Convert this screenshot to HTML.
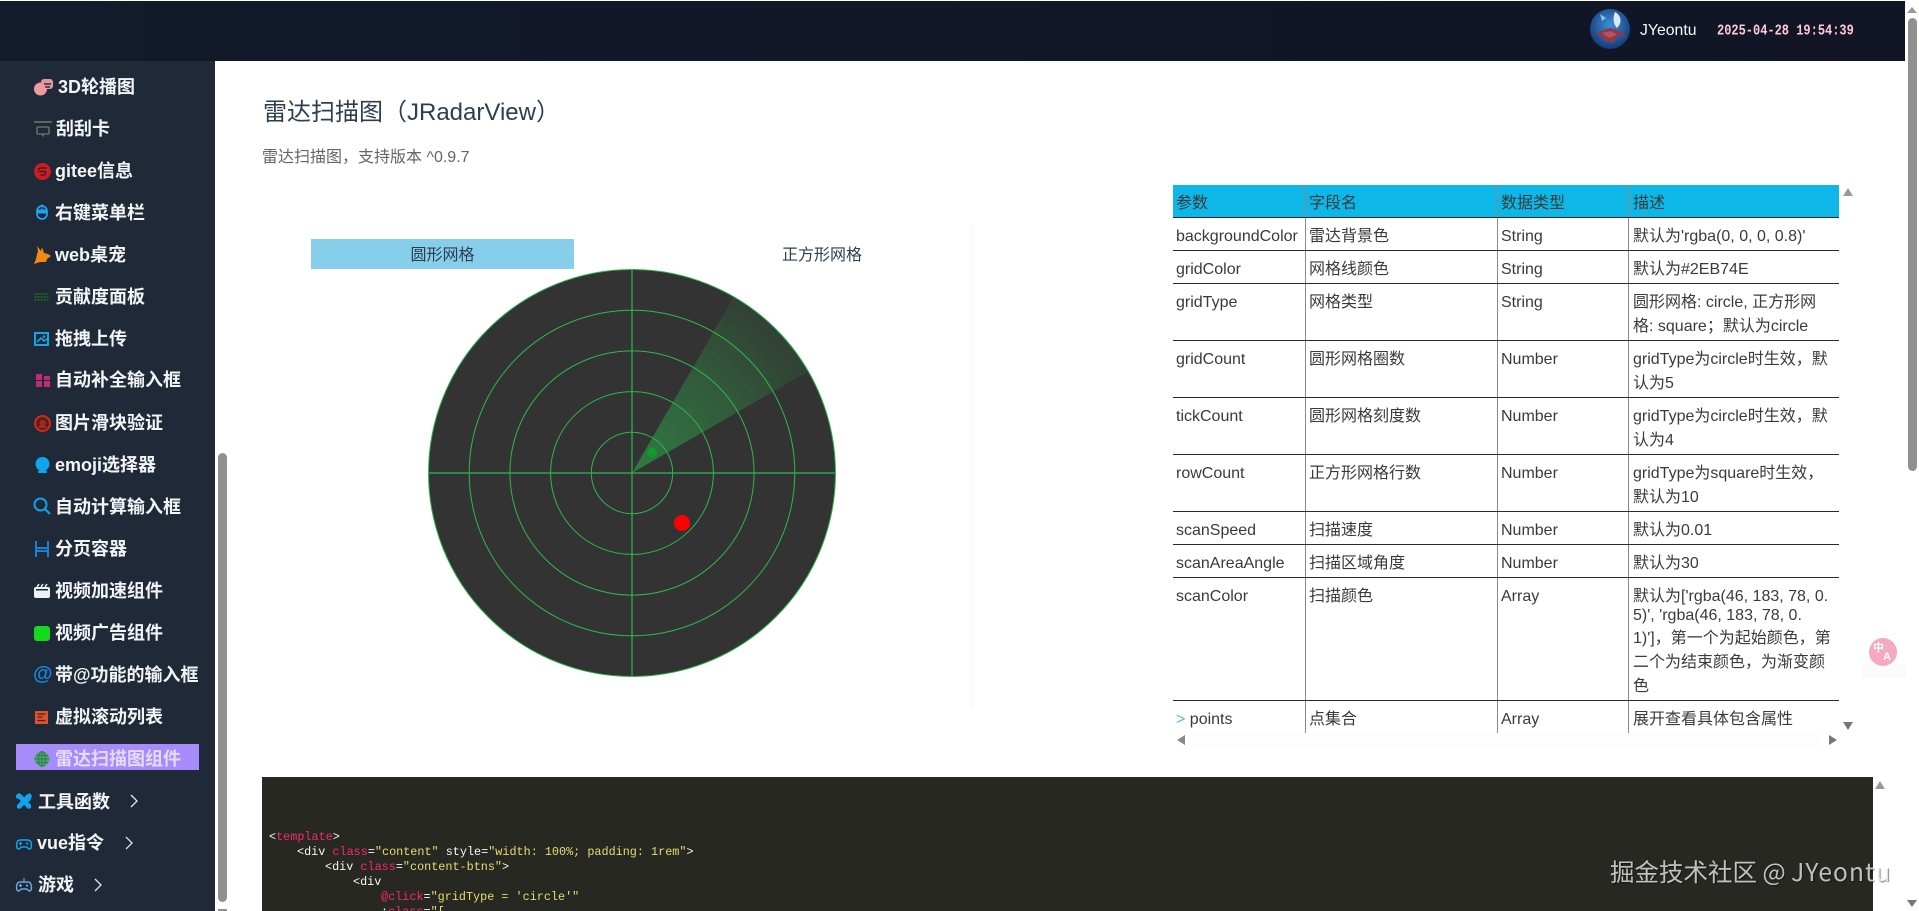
<!DOCTYPE html>
<html lang="zh">
<head>
<meta charset="utf-8">
<title>雷达扫描图</title>
<style>
html,body{margin:0;padding:0;background:#fff;overflow:hidden}
body{width:1919px;height:911px;position:relative;font-family:"Liberation Sans","Noto Sans CJK SC",sans-serif;color:#333}
.hd{position:absolute;left:0;top:1px;width:1905px;height:60px;background:linear-gradient(90deg,#121a2b,#111525)}
.sb{position:absolute;left:0;top:61px;width:215px;height:850px;background:#1f2937}
.m{position:absolute;font-size:18px;font-weight:700;line-height:24px;height:24px;color:#f3f4f6;white-space:nowrap}
.i{position:absolute;overflow:visible}
.t{position:absolute;font-size:16px;line-height:24px;height:24px;margin-top:2px;white-space:nowrap;color:#3a3a3a}
.h{position:absolute;left:1173px;width:666px;height:1px;background:#2a2a2a}
.v{position:absolute;width:1px;top:185px;height:548px;background:#8a8a8a}
.c{position:absolute;font-family:"Liberation Mono",monospace;font-size:11.8px;line-height:15px;height:15px;white-space:pre;color:#f8f8f2}
.c b{font-weight:400;color:#f92672}.c i{font-style:normal;color:#e6db74}
.ar{position:absolute;width:0;height:0;border-style:solid;border-color:transparent}
</style>
</head>
<body>
<div class="hd"></div>
<div class="sb"></div>

<!-- header right -->
<svg class="i" style="left:1590px;top:9px" width="40" height="40" viewBox="0 0 40 40">
<defs><clipPath id="av"><circle cx="20" cy="20" r="20"/></clipPath>
<radialGradient id="avb" cx="50%" cy="40%" r="60%"><stop offset="0" stop-color="#3f8fd8"/><stop offset="1" stop-color="#123a78"/></radialGradient></defs>
<g clip-path="url(#av)"><rect width="40" height="40" fill="url(#avb)"/>
<path d="M25 3C32 7 32 14 27 19 24 16 22 10 25 3Z" fill="#dfe8f2"/>
<path d="M5 24 14 21 20 19 30 22 36 28 27 27 24 34 15 32 10 27Z" fill="#8a3a4c"/>
<path d="M12 24 22 22 27 26 19 29Z" fill="#b9505e"/>
<path d="M10 5 16 9 12 12Z" fill="#7cc4ee"/></g>
</svg>
<div style="position:absolute;left:1640px;top:19px;font-size:15.8px;line-height:24px;color:#f4f6fa;white-space:nowrap">JYeontu</div>
<div style="position:absolute;left:1717px;top:24px;font-family:'Liberation Mono',monospace;font-weight:700;font-size:12px;line-height:14px;color:#ffc9d6;white-space:nowrap;transform:scaleY(1.2)">2025-04-28 19:54:39</div>

<!-- sidebar icons -->
<svg class="i" style="left:34px;top:78px" width="20" height="18" viewBox="0 0 20 18"><rect x="7" y="1" width="12" height="10" rx="3" fill="#e09a9a"/><circle cx="6.500" cy="11" r="6.500" fill="#ee9a9e"/><path d="M10 6h7M11 9h5" stroke="#3b2a35" stroke-width="1.600"/></svg>
<svg class="i" style="left:34px;top:121px" width="18" height="16" viewBox="0 0 18 16"><path d="M0 1h18" stroke="#777" stroke-width="1.400"/><rect x="3" y="6" width="12" height="7" rx="1" fill="none" stroke="#777" stroke-width="1.300"/><path d="M8 13l1.500 2.500" stroke="#777" stroke-width="1.300"/></svg>
<svg class="i" style="left:34px;top:163px" width="17" height="17" viewBox="0 0 17 17"><circle cx="8.500" cy="8.500" r="8.500" fill="#c71d23"/><path d="M4.500 8.500h7v1.500a2 2 0 0 1-2 2h-3M12.500 5H6.500a2 2 0 0 0-2 2" fill="none" stroke="#3a1520" stroke-width="1.300"/></svg>
<svg class="i" style="left:36px;top:204px" width="12" height="16" viewBox="0 0 12 16"><rect x="1" y="2" width="10" height="13" rx="5" fill="none" stroke="#1da6f0" stroke-width="1.700"/><path d="M1 6h10V9H1zM6 0v6" fill="#1da6f0" stroke="#1da6f0"/></svg>
<svg class="i" style="left:34px;top:246px" width="17" height="18" viewBox="0 0 17 18"><path d="M3 0l4 5 1-4 2 6 4 1 3 2-4 3-1 3-6 0-6 2 2-5 1-5 1-3z" fill="#f08a14"/></svg>
<svg class="i" style="left:34px;top:293px" width="16" height="9" viewBox="0 0 16 9"><path d="M1.500 0v9M4.500 0v9M7.500 0v9M10.500 0v9M13.500 0v9" stroke="#1f5a2a" stroke-width="2" stroke-dasharray="2 1"/></svg>
<svg class="i" style="left:34px;top:332px" width="15" height="14" viewBox="0 0 15 14"><rect x="1" y="1" width="13" height="12" fill="none" stroke="#13a4f0" stroke-width="2"/><path d="M3 10l4-4 3 3 3-2" fill="none" stroke="#13a4f0" stroke-width="1.600"/><circle cx="10" cy="4.500" r="1.300" fill="#13a4f0"/></svg>
<svg class="i" style="left:36px;top:374px" width="14" height="13" viewBox="0 0 14 13"><rect width="6" height="6" fill="#c12a78"/><rect x="8" y="2" width="6" height="4" fill="#c12a78"/><rect y="7" width="6" height="6" fill="#c12a78"/><rect x="8" y="7" width="6" height="6" fill="#c12a78"/></svg>
<svg class="i" style="left:34px;top:415px" width="17" height="17" viewBox="0 0 17 17"><circle cx="8.500" cy="8.500" r="7.500" fill="#5a1f1e" stroke="#cf2a1c" stroke-width="2"/><circle cx="8.500" cy="8" r="3" fill="#a52a1e"/><path d="M4 13l2-3h5l2 3" fill="#a52a1e"/></svg>
<svg class="i" style="left:35px;top:457px" width="15" height="16" viewBox="0 0 15 16"><circle cx="7.500" cy="7" r="7" fill="#0fa5ef"/><rect x="3" y="13.500" width="9" height="2.500" rx="1" fill="#0fa5ef"/></svg>
<svg class="i" style="left:33px;top:497px" width="18" height="18" viewBox="0 0 18 18"><circle cx="7.500" cy="7.500" r="6" fill="none" stroke="#12a0ea" stroke-width="2"/><path d="M12 12l5 5" stroke="#12a0ea" stroke-width="2.200"/></svg>
<svg class="i" style="left:35px;top:541px" width="14" height="16" viewBox="0 0 14 16"><path d="M1 0v16M13 0v16M1 7h12M1 10h12" stroke="#1c7fd0" stroke-width="2" fill="none"/></svg>
<svg class="i" style="left:34px;top:584px" width="16" height="14" viewBox="0 0 16 14"><rect y="3" width="16" height="11" rx="2" fill="#eef1f4"/><path d="M3 3l2-3M7 3l2-3M11 3l2-3" stroke="#eef1f4" stroke-width="1.500"/><rect x="2" y="5" width="12" height="1.500" fill="#1f2937"/></svg>
<div style="position:absolute;left:34px;top:626px;width:16px;height:15px;border-radius:3px;background:#15d91f"></div>
<div style="position:absolute;left:33px;top:662px;width:18px;height:24px;font-size:20px;line-height:24px;font-weight:700;color:#1489e0;text-align:center">@</div>
<svg class="i" style="left:35px;top:711px" width="13" height="13" viewBox="0 0 13 13"><rect width="13" height="13" fill="#e2502a"/><path d="M2.500 3h8M2.500 6h5M2.500 9.500h8" stroke="#3a2320" stroke-width="1.200"/></svg>

<div style="position:absolute;left:16px;top:744px;width:183px;height:26px;background:#a78bfa"></div>
<svg class="i" style="left:34px;top:751px" width="16" height="16" viewBox="0 0 16 16"><circle cx="8" cy="8" r="7.500" fill="#52a56f"/><path d="M0.500 8h15M8 0.500v15M2 4.500h12M2 11.500h12" stroke="#2e7d50" stroke-width="1"/><ellipse cx="8" cy="8" rx="3.500" ry="7.500" fill="none" stroke="#2e7d50"/></svg>

<svg class="i" style="left:16px;top:793px" width="16" height="16" viewBox="0 0 16 16"><path d="M0 2l3-2 3 2 9 10 0 3-3 1L3 6 0 5z" fill="#12a4ea"/><path d="M16 3l-2-3-4 2-2 3-7 7 0 3 3 1 7-7 3-1z" fill="#12a4ea"/></svg>
<svg class="i" style="left:16px;top:836px" width="16" height="14" viewBox="0 0 16 14"><path d="M4 4h8c2.500 0 3.200 2 3.400 4.500.2 2.500-.5 4.500-2 4.500-1.300 0-1.800-2-3-2H5.600c-1.200 0-1.700 2-3 2-1.500 0-2.200-2-2-4.500C.8 6 1.500 4 4 4z" fill="none" stroke="#12a4ea" stroke-width="1.500"/><path d="M3 7.500h3M4.500 6v3" stroke="#12a4ea" stroke-width="1.200"/><circle cx="11" cy="7.500" r="1.100" fill="#12a4ea"/></svg>
<svg class="i" style="left:16px;top:878px" width="16" height="14" viewBox="0 0 16 14"><path d="M4 4h8c2.500 0 3.200 2 3.400 4.500.2 2.500-.5 4.500-2 4.500-1.300 0-1.800-2-3-2H5.600c-1.200 0-1.700 2-3 2-1.500 0-2.200-2-2-4.500C.8 6 1.500 4 4 4z" fill="none" stroke="#6da6e0" stroke-width="1.500"/><path d="M8 0v4M3 7.500h3M4.500 6v3" stroke="#6da6e0" stroke-width="1.200"/><circle cx="11" cy="7.500" r="1.100" fill="#6da6e0"/></svg>

<!-- sidebar text -->
<div class="m" style="left:58px;top:75px">3D轮播图</div>
<div class="m" style="left:56px;top:117px">刮刮卡</div>
<div class="m" style="left:55px;top:159px">gitee信息</div>
<div class="m" style="left:55px;top:201px">右键菜单栏</div>
<div class="m" style="left:55px;top:243px">web桌宠</div>
<div class="m" style="left:55px;top:285px">贡献度面板</div>
<div class="m" style="left:55px;top:327px">拖拽上传</div>
<div class="m" style="left:55px;top:368px">自动补全输入框</div>
<div class="m" style="left:55px;top:411px">图片滑块验证</div>
<div class="m" style="left:55px;top:453px">emoji选择器</div>
<div class="m" style="left:55px;top:495px">自动计算输入框</div>
<div class="m" style="left:55px;top:537px">分页容器</div>
<div class="m" style="left:55px;top:579px">视频加速组件</div>
<div class="m" style="left:55px;top:621px">视频广告组件</div>
<div class="m" style="left:55px;top:663px">带@功能的输入框</div>
<div class="m" style="left:55px;top:705px">虚拟滚动列表</div>
<div class="m" style="left:55px;top:747px;color:#e4dcfb">雷达扫描图组件</div>
<div class="m" style="left:38px;top:790px">工具函数</div>
<div class="m" style="left:37px;top:831px">vue指令</div>
<div class="m" style="left:38px;top:873px">游戏</div>
<svg class="i" style="left:130px;top:794px" width="9" height="14" viewBox="0 0 9 14"><path d="M1 1l6 6-6 6" fill="none" stroke="#e5e7eb" stroke-width="1.300"/></svg>
<svg class="i" style="left:125px;top:836px" width="9" height="14" viewBox="0 0 9 14"><path d="M1 1l6 6-6 6" fill="none" stroke="#e5e7eb" stroke-width="1.300"/></svg>
<svg class="i" style="left:94px;top:878px" width="9" height="14" viewBox="0 0 9 14"><path d="M1 1l6 6-6 6" fill="none" stroke="#e5e7eb" stroke-width="1.300"/></svg>

<!-- sidebar scrollbar -->
<div style="position:absolute;left:218px;top:453px;width:9px;height:449px;border-radius:5px;background:#909090"></div>
<div style="position:absolute;left:218px;top:909px;width:9px;height:2px;background:#909090"></div>

<!-- title -->
<div style="position:absolute;left:263px;top:95px;font-size:24px;line-height:36px;color:#2c3e50;white-space:nowrap">雷达扫描图（JRadarView）</div>
<div style="position:absolute;left:262px;top:146px;font-size:16px;line-height:24px;color:#666;white-space:nowrap">雷达扫描图，支持版本 ^0.9.7</div>

<!-- radar -->
<div style="position:absolute;left:311px;top:239px;width:263px;height:30px;background:#87ceeb;text-align:center;font-size:16px;line-height:34px;color:#2c3e50">圆形网格</div>
<div style="position:absolute;left:782px;top:239px;width:80px;height:30px;font-size:16px;line-height:34px;color:#2c3e50;white-space:nowrap">正方形网格</div>
<div style="position:absolute;left:970px;top:225px;width:5px;height:485px;background:#fbfbfb"></div>
<svg class="i" style="left:428px;top:269px" width="408" height="408" viewBox="0 0 408 408">
<defs><radialGradient id="sw" gradientUnits="userSpaceOnUse" cx="204" cy="204" r="204"><stop offset="0" stop-color="#2eb74e" stop-opacity=".55"/><stop offset="1" stop-color="#2eb74e" stop-opacity=".1"/></radialGradient></defs>
<circle cx="204" cy="204" r="203.500" fill="#333"/>
<path d="M204 204L305.800 27.700A203.500 203.500 0 0 1 380.300 102.200Z" fill="url(#sw)"/>
<g fill="none" stroke="#2eb74e" stroke-width="1">
<circle cx="204" cy="204" r="203.500"/>
<circle cx="204" cy="204" r="162.800"/>
<circle cx="204" cy="204" r="122.100"/>
<circle cx="204" cy="204" r="81.400"/>
<circle cx="204" cy="204" r="40.700"/>
</g>
<path d="M204 0v408M0 204h408" stroke="#2eb74e" stroke-width="1.200"/>
<circle cx="224" cy="183.500" r="5" fill="#0d9c2d"/>
<circle cx="254" cy="254" r="8" fill="#ff0000"/>
</svg>

<!-- table -->
<div style="position:absolute;left:1173px;top:185px;width:666px;height:32px;background:#0db7e8"></div>
<div class="v" style="left:1305px"></div>
<div class="v" style="left:1497px"></div>
<div class="v" style="left:1628px"></div>
<div class="h" style="top:217px"></div><div class="h" style="top:250px"></div><div class="h" style="top:283px"></div>
<div class="h" style="top:340px"></div><div class="h" style="top:397px"></div><div class="h" style="top:454px"></div>
<div class="h" style="top:511px"></div><div class="h" style="top:544px"></div><div class="h" style="top:577px"></div><div class="h" style="top:700px"></div>

<div class="t" style="left:1176px;top:190px">参数</div><div class="t" style="left:1309px;top:190px">字段名</div><div class="t" style="left:1501px;top:190px">数据类型</div><div class="t" style="left:1633px;top:190px">描述</div>
<div class="t" style="left:1176px;top:223px">backgroundColor</div><div class="t" style="left:1309px;top:223px">雷达背景色</div><div class="t" style="left:1501px;top:223px">String</div><div class="t" style="left:1633px;top:223px">默认为'rgba(0, 0, 0, 0.8)'</div>
<div class="t" style="left:1176px;top:256px">gridColor</div><div class="t" style="left:1309px;top:256px">网格线颜色</div><div class="t" style="left:1501px;top:256px">String</div><div class="t" style="left:1633px;top:256px">默认为#2EB74E</div>
<div class="t" style="left:1176px;top:289px">gridType</div><div class="t" style="left:1309px;top:289px">网格类型</div><div class="t" style="left:1501px;top:289px">String</div><div class="t" style="left:1633px;top:289px">圆形网格: circle, 正方形网</div><div class="t" style="left:1633px;top:313px">格: square；默认为circle</div>
<div class="t" style="left:1176px;top:346px">gridCount</div><div class="t" style="left:1309px;top:346px">圆形网格圈数</div><div class="t" style="left:1501px;top:346px">Number</div><div class="t" style="left:1633px;top:346px">gridType为circle时生效，默</div><div class="t" style="left:1633px;top:370px">认为5</div>
<div class="t" style="left:1176px;top:403px">tickCount</div><div class="t" style="left:1309px;top:403px">圆形网格刻度数</div><div class="t" style="left:1501px;top:403px">Number</div><div class="t" style="left:1633px;top:403px">gridType为circle时生效，默</div><div class="t" style="left:1633px;top:427px">认为4</div>
<div class="t" style="left:1176px;top:460px">rowCount</div><div class="t" style="left:1309px;top:460px">正方形网格行数</div><div class="t" style="left:1501px;top:460px">Number</div><div class="t" style="left:1633px;top:460px">gridType为square时生效，</div><div class="t" style="left:1633px;top:484px">默认为10</div>
<div class="t" style="left:1176px;top:517px">scanSpeed</div><div class="t" style="left:1309px;top:517px">扫描速度</div><div class="t" style="left:1501px;top:517px">Number</div><div class="t" style="left:1633px;top:517px">默认为0.01</div>
<div class="t" style="left:1176px;top:550px">scanAreaAngle</div><div class="t" style="left:1309px;top:550px">扫描区域角度</div><div class="t" style="left:1501px;top:550px">Number</div><div class="t" style="left:1633px;top:550px">默认为30</div>
<div class="t" style="left:1176px;top:583px">scanColor</div><div class="t" style="left:1309px;top:583px">扫描颜色</div><div class="t" style="left:1501px;top:583px">Array</div>
<div class="t" style="left:1633px;top:583px">默认为['rgba(46, 183, 78, 0.</div><div class="t" style="left:1633px;top:602px">5)', 'rgba(46, 183, 78, 0.</div><div class="t" style="left:1633px;top:625px">1)']，第一个为起始颜色，第</div><div class="t" style="left:1633px;top:649px">二个为结束颜色，为渐变颜</div><div class="t" style="left:1633px;top:673px">色</div>
<div class="t" style="left:1176px;top:706px"><span style="color:#5fb6dc">&gt;</span> points</div><div class="t" style="left:1309px;top:706px">点集合</div><div class="t" style="left:1501px;top:706px">Array</div><div class="t" style="left:1633px;top:706px">展开查看具体包含属性</div>

<!-- table scrollbars -->
<div class="ar" style="left:1843px;top:188px;border-width:0 5px 8px;border-bottom-color:#999"></div>
<div class="ar" style="left:1843px;top:722px;border-width:8px 5px 0;border-top-color:#777"></div>
<div style="position:absolute;left:1190px;top:733px;width:630px;height:14px;background:#fdfdfd"></div>
<div class="ar" style="left:1177px;top:735px;border-width:5px 8px 5px 0;border-right-color:#888"></div>
<div class="ar" style="left:1829px;top:735px;border-width:5px 0 5px 8px;border-left-color:#777"></div>

<!-- code block -->
<div style="position:absolute;left:262px;top:777px;width:1611px;height:134px;background:#272822;overflow:hidden"></div>
<div class="c" style="left:269px;top:830px">&lt;<b>template</b>&gt;</div>
<div class="c" style="left:297px;top:845px">&lt;div <b>class</b>=<i>"content"</i> <span>style</span>=<i>"width: 100%; padding: 1rem"</i>&gt;</div>
<div class="c" style="left:325px;top:860px">&lt;div <b>class</b>=<i>"content-btns"</i>&gt;</div>
<div class="c" style="left:353px;top:875px">&lt;div</div>
<div class="c" style="left:381px;top:890px"><b>@click</b>=<i>"gridType = 'circle'"</i></div>
<div class="c" style="left:381px;top:905px;height:6px;overflow:hidden">:<b>class</b>=<i>"[</i></div>

<!-- code scrollbar -->
<div class="ar" style="left:1875px;top:781px;border-width:0 5px 8px;border-bottom-color:#999"></div>

<!-- watermark -->
<div style="position:absolute;left:1610px;top:854px;font-family:'Noto Sans CJK SC','Liberation Sans',sans-serif;font-size:24.500px;line-height:36px;color:rgba(255,255,255,.72);text-shadow:1px 1px 1px rgba(0,0,0,.45);white-space:nowrap">掘金技术社区 @ <span style="letter-spacing:1.100px">JYeontu</span></div>

<!-- translate float -->
<div style="position:absolute;left:1862px;top:664px;width:44px;height:14px;background:#fbfbfb;border-radius:4px"></div>
<div style="position:absolute;left:1869px;top:638px;width:28px;height:28px;border-radius:50%;background:#f5a9bf"></div>
<div style="position:absolute;left:1873px;top:641px;font-size:11px;font-weight:700;line-height:13px;color:#fff;font-family:'Noto Sans CJK SC',sans-serif">中</div>
<div style="position:absolute;left:1883px;top:651px;font-size:11px;font-weight:700;line-height:13px;color:#fff;font-family:'Liberation Sans',sans-serif">A</div>

<!-- page scrollbar -->
<div class="ar" style="left:1907px;top:7px;border-width:0 5px 6px;border-bottom-color:#999"></div>
<div style="position:absolute;left:1908px;top:18px;width:9px;height:453px;border-radius:5px;background:#909090"></div>
<div class="ar" style="left:1907px;top:900px;border-width:7px 5px 0;border-top-color:#777"></div>
</body>
</html>
